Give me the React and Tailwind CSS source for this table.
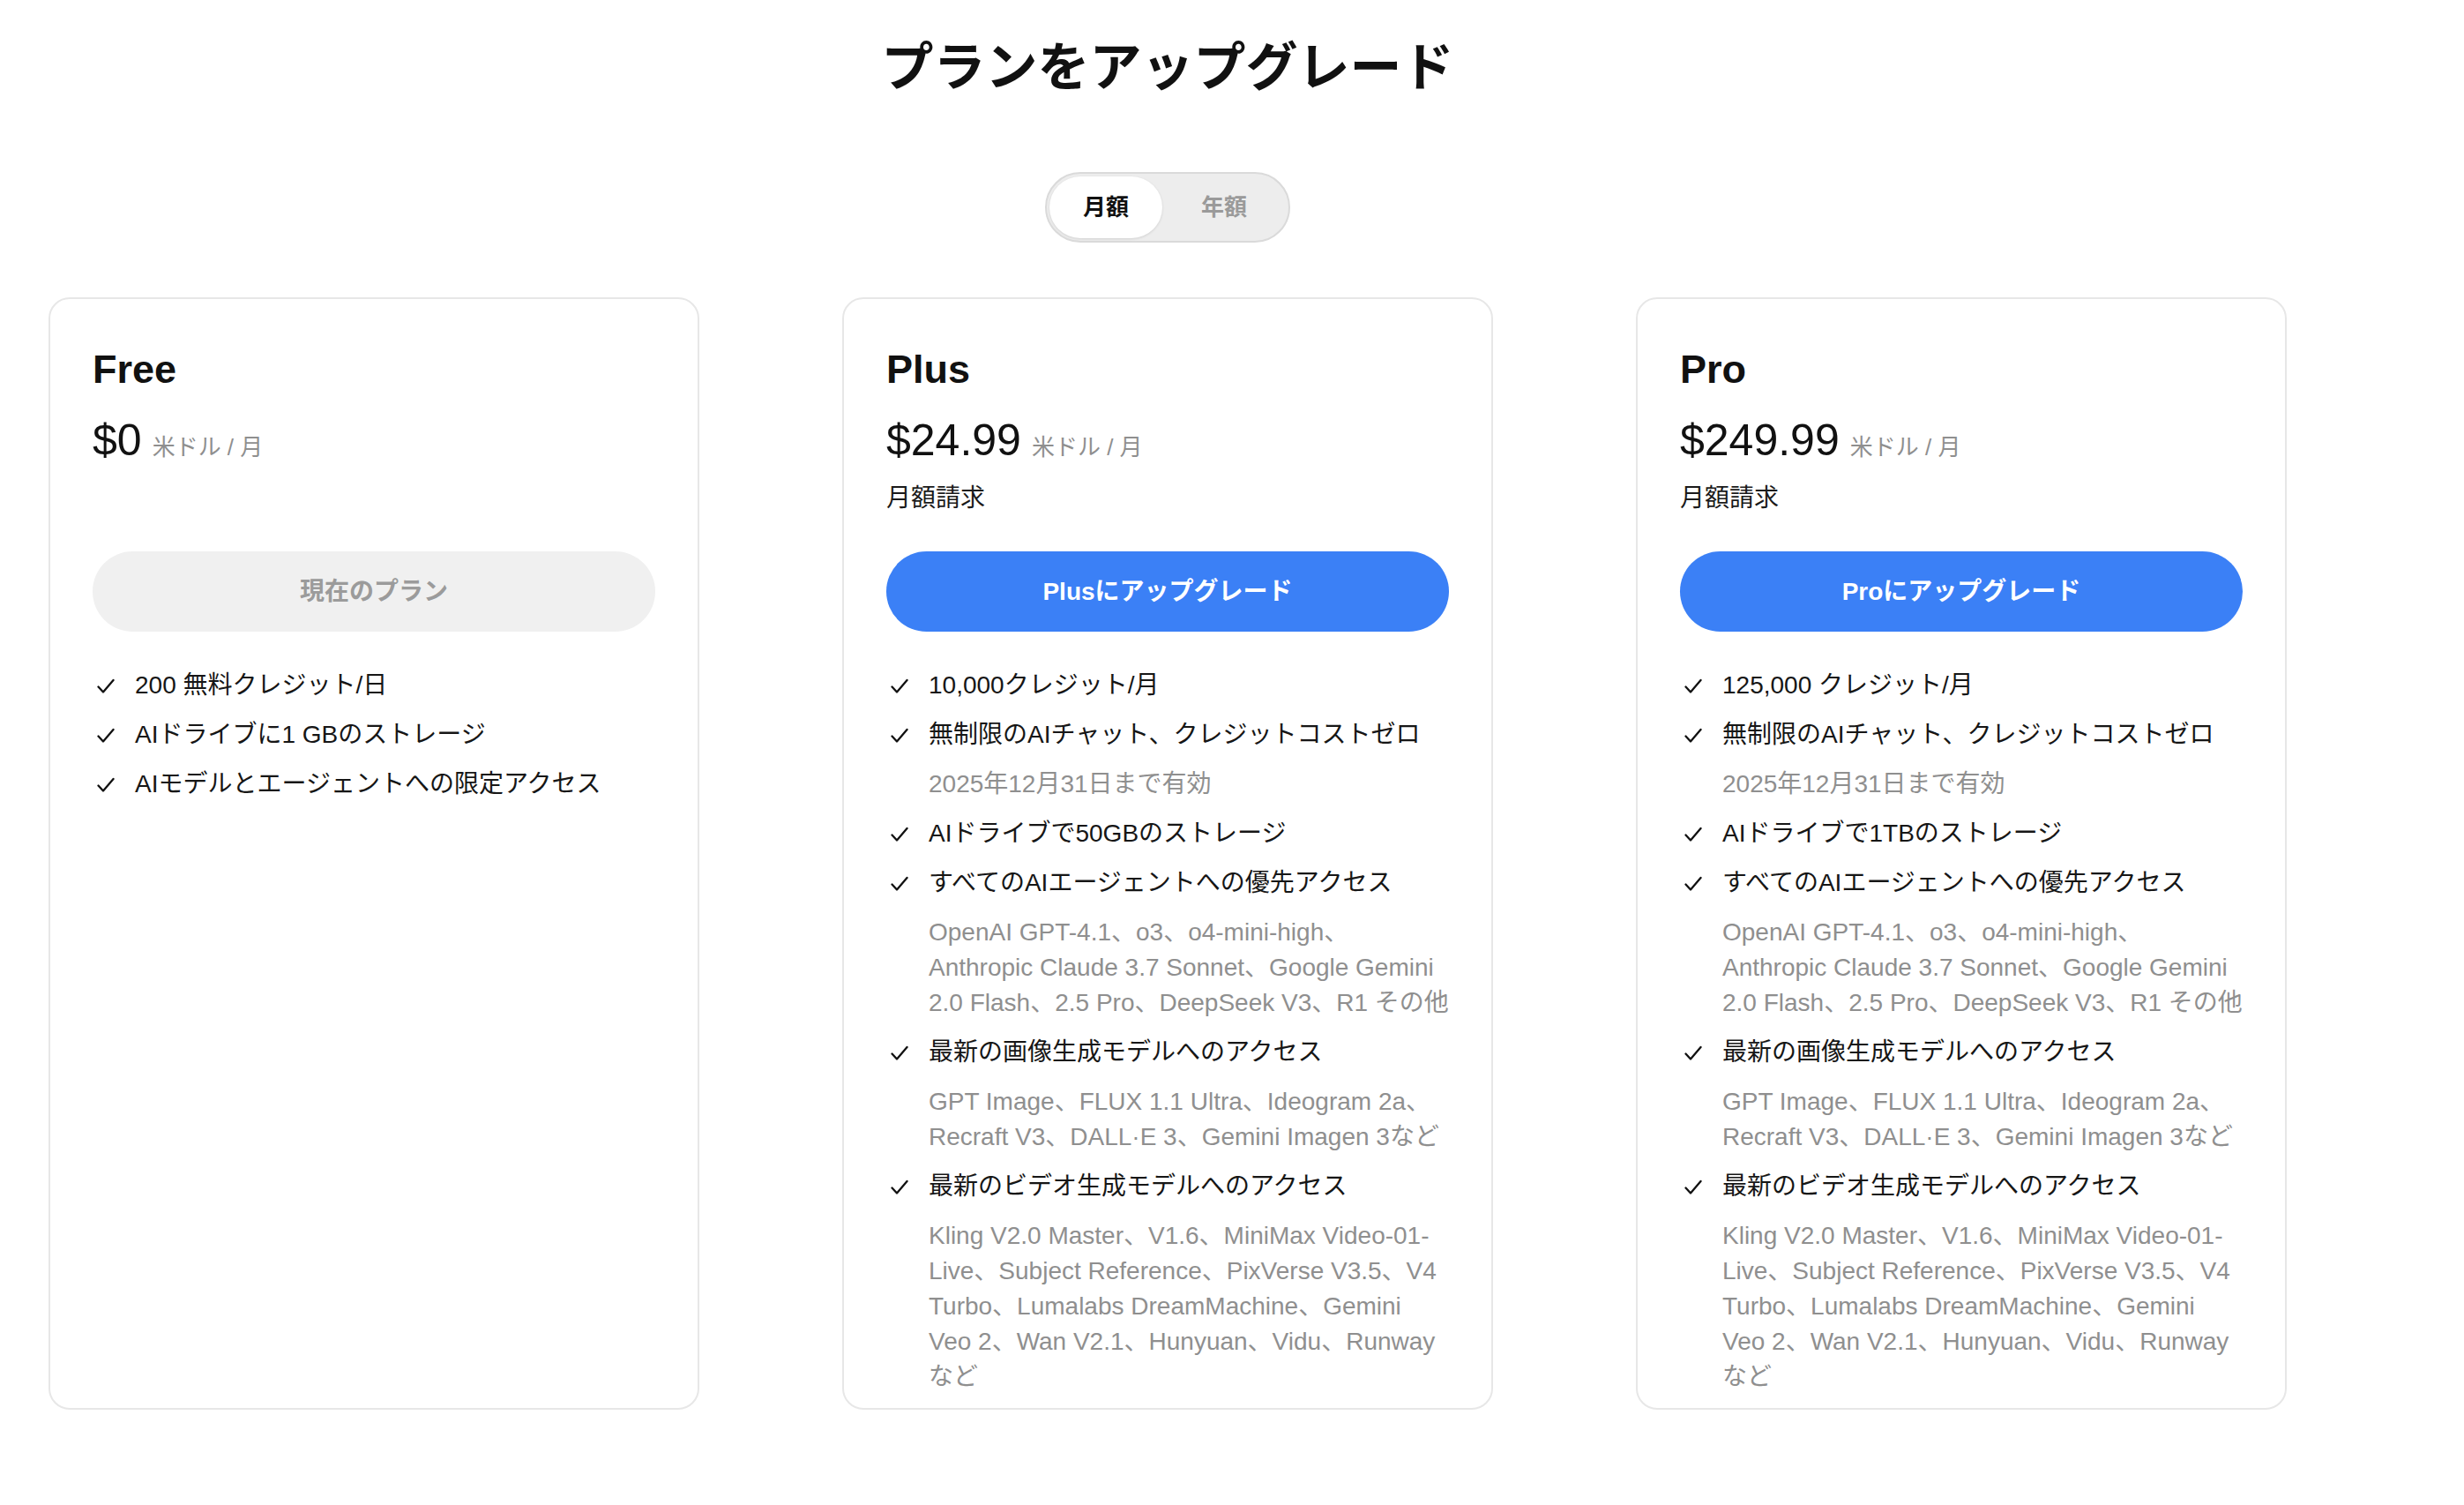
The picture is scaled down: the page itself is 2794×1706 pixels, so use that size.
import React, { useState } from "react";

// plan data
const plans = [
  {
    name: "Free",
    price: "$0",
    billing: null,
    button: "現在のプラン",
    current: true,
    features: [
      { text: ["200 無料クレジット/日"] },
      { text: ["AIドライブに1 GBのストレージ"] },
      { text: ["AIモデルとエージェントへの限定アクセス"] },
    ],
  },
  {
    name: "Plus",
    price: "$24.99",
    billing: "月額請求",
    button: "Plusにアップグレード",
    features: [
      { text: ["10,000クレジット/月"] },
      { text: ["無制限のAIチャット、クレジットコストゼロ"] },
      { sub: true, text: ["2025年12月31日まで有効"] },
      { text: ["AIドライブで50GBのストレージ"] },
      { text: ["すべてのAIエージェントへの優先アクセス"] },
      {
        sub: true,
        text: [
          "OpenAI GPT-4.1、o3、o4-mini-high、",
          "Anthropic Claude 3.7 Sonnet、Google Gemini",
          "2.0 Flash、2.5 Pro、DeepSeek V3、R1 その他",
        ],
      },
      { text: ["最新の画像生成モデルへのアクセス"] },
      {
        sub: true,
        text: ["GPT Image、FLUX 1.1 Ultra、Ideogram 2a、", "Recraft V3、DALL·E 3、Gemini Imagen 3など"],
      },
      { text: ["最新のビデオ生成モデルへのアクセス"] },
      {
        sub: true,
        text: [
          "Kling V2.0 Master、V1.6、MiniMax Video-01-",
          "Live、Subject Reference、PixVerse V3.5、V4",
          "Turbo、Lumalabs DreamMachine、Gemini",
          "Veo 2、Wan V2.1、Hunyuan、Vidu、Runway",
          "など",
        ],
      },
    ],
  },
  {
    name: "Pro",
    price: "$249.99",
    billing: "月額請求",
    button: "Proにアップグレード",
    features: [
      { text: ["125,000 クレジット/月"] },
      { text: ["無制限のAIチャット、クレジットコストゼロ"] },
      { sub: true, text: ["2025年12月31日まで有効"] },
      { text: ["AIドライブで1TBのストレージ"] },
      { text: ["すべてのAIエージェントへの優先アクセス"] },
      {
        sub: true,
        text: [
          "OpenAI GPT-4.1、o3、o4-mini-high、",
          "Anthropic Claude 3.7 Sonnet、Google Gemini",
          "2.0 Flash、2.5 Pro、DeepSeek V3、R1 その他",
        ],
      },
      { text: ["最新の画像生成モデルへのアクセス"] },
      {
        sub: true,
        text: ["GPT Image、FLUX 1.1 Ultra、Ideogram 2a、", "Recraft V3、DALL·E 3、Gemini Imagen 3など"],
      },
      { text: ["最新のビデオ生成モデルへのアクセス"] },
      {
        sub: true,
        text: [
          "Kling V2.0 Master、V1.6、MiniMax Video-01-",
          "Live、Subject Reference、PixVerse V3.5、V4",
          "Turbo、Lumalabs DreamMachine、Gemini",
          "Veo 2、Wan V2.1、Hunyuan、Vidu、Runway",
          "など",
        ],
      },
    ],
  },
];

const Check = () => (
  <svg width="20" height="18" viewBox="0 0 20 18" fill="none" className="ml-[5px] mt-[12px] shrink-0">
    <path d="M1.5 9.5 L7 15.5 L18.5 2" stroke="#111" strokeWidth="2.3" strokeLinecap="round" strokeLinejoin="round" />
  </svg>
);

const Feature = ({ item }) => {
  if (item.sub) {
    return (
      <div className="pl-[48px] text-[28px] leading-[40px] text-[#8f8f8f]">
        {item.text.map((line, i) => (
          <div key={i} className="h-[40px] whitespace-nowrap">
            {line}
          </div>
        ))}
      </div>
    );
  }
  return (
    <div className="flex h-[40px] items-start text-[28px] leading-[40px] text-[#161616]">
      <Check />
      <span className="ml-[23px] whitespace-nowrap">{item.text[0]}</span>
    </div>
  );
};

const PlanCard = ({ plan }) => (
  <div className="h-[1261px] overflow-hidden rounded-[24px] border-2 border-[#e7e7e7] bg-white px-[48px] pt-[50px]">
    <h2 className="h-[60px] text-[45px] font-bold leading-[60px] text-[#111]">{plan.name}</h2>
    <div className="mt-[20px] flex h-[60px] items-baseline leading-[60px]">
      <span className="text-[50px] text-[#111]">{plan.price}</span>
      <span className="ml-[12px] text-[26px] text-[#8f8f8f]">米ドル / 月</span>
    </div>
    <div className="mt-[16px] h-[40px] text-[28px] leading-[40px] text-[#1a1a1a]">{plan.billing}</div>
    {plan.current ? (
      <button className="mt-[40px] h-[91px] w-full rounded-full bg-[#f0f0f0] text-[28px] font-bold text-[#9b9b9b]">
        {plan.button}
      </button>
    ) : (
      <button className="mt-[40px] h-[91px] w-full rounded-full bg-[#3b80f6] text-[28px] font-bold text-white">
        {plan.button}
      </button>
    )}
    <div className="mt-[41px] flex flex-col gap-[16px]">
      {plan.features.map((f, i) => (
        <Feature key={i} item={f} />
      ))}
    </div>
  </div>
);

export default function App() {
  const [period, setPeriod] = useState("monthly");

  return (
    <div
      className="min-h-[1706px] w-full bg-white"
      style={{ fontFamily: '"Liberation Sans", "Noto Sans CJK JP", sans-serif' }}
    >
      <div className="flex w-[2648px] flex-col items-center px-[55px]">
        <h1 className="h-[117px] pt-[37px] text-[59px] font-bold leading-[80px] text-[#111]">プランをアップグレード</h1>

        {/* billing period toggle */}
        <div className="mt-[78px] flex rounded-full border-2 border-[#dadada] bg-[#ededed] p-[3px]">
          <button
            onClick={() => setPeriod("monthly")}
            className={
              period === "monthly"
                ? "h-[70px] w-[128px] rounded-full bg-white text-[26px] font-bold text-[#111] shadow-[0_1px_3px_rgba(0,0,0,0.12)]"
                : "h-[70px] w-[128px] rounded-full text-[26px] font-bold text-[#9a9a9a]"
            }
          >
            月額
          </button>
          <button
            onClick={() => setPeriod("yearly")}
            className={
              period === "yearly"
                ? "h-[70px] w-[140px] rounded-full bg-white text-[26px] font-bold text-[#111] shadow-[0_1px_3px_rgba(0,0,0,0.12)]"
                : "h-[70px] w-[140px] rounded-full text-[26px] font-bold text-[#9a9a9a]"
            }
          >
            年額
          </button>
        </div>

        <div className="mt-[62px] grid w-full grid-cols-[738px_738px_738px] gap-[162px]">
          {plans.map((p) => (
            <PlanCard key={p.name} plan={p} />
          ))}
        </div>
      </div>
    </div>
  );
}
